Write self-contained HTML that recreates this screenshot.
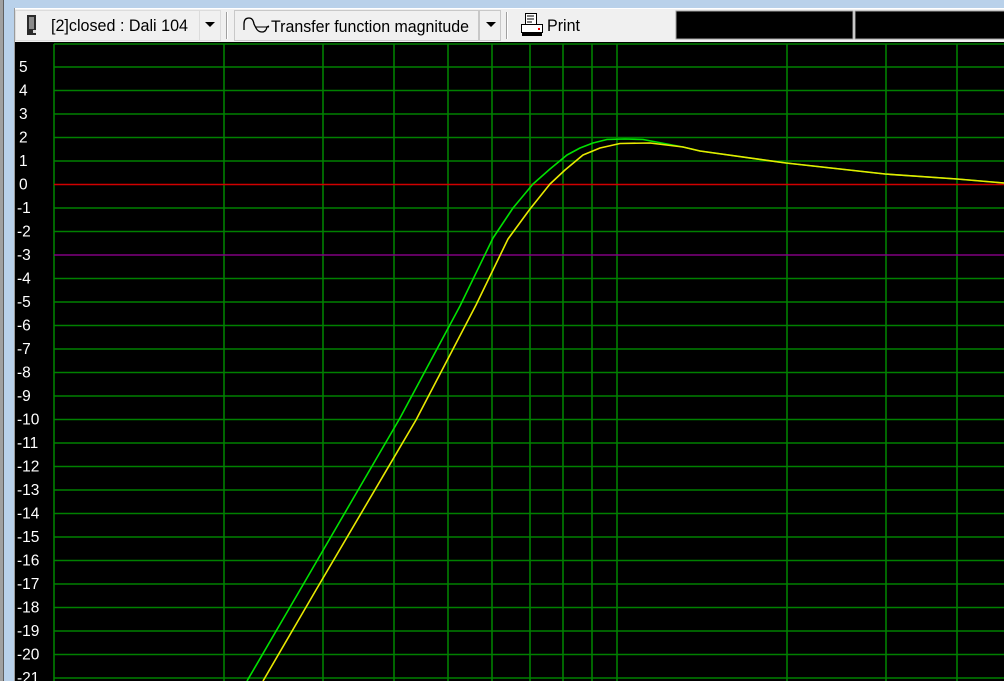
<!DOCTYPE html>
<html><head><meta charset="utf-8"><style>
html,body{margin:0;padding:0;width:1004px;height:681px;overflow:hidden;background:#000;}
svg{display:block}
text{font-family:"Liberation Sans",sans-serif;}
</style></head><body>
<svg width="1004" height="681" viewBox="0 0 1004 681" xmlns="http://www.w3.org/2000/svg">
<!-- window frame -->
<rect x="0" y="0" width="1004" height="681" fill="#b9d1ea"/>
<rect x="0" y="0" width="3" height="681" fill="#a0a0a0"/>
<rect x="3" y="0" width="1" height="681" fill="#606060"/>
<rect x="14" y="8" width="990" height="1" fill="#ffffff"/>
<rect x="14" y="9" width="990" height="34" fill="#f0f0f0"/>
<rect x="14" y="8" width="1" height="673" fill="#9a9a9a"/>
<!-- combo 1 -->
<rect x="15.5" y="10.5" width="205" height="30" fill="#f0f0f0" stroke="#dcdcdc"/>
<rect x="27" y="15" width="9" height="20" fill="#2a2a2a"/>
<rect x="29" y="17" width="5" height="12" fill="#8a8a8a"/>
<rect x="33" y="30" width="3" height="3" fill="#ddd"/>
<text x="51" y="31" font-size="16.5" fill="#000" textLength="137" lengthAdjust="spacingAndGlyphs">[2]closed : Dali 104</text>
<rect x="199.5" y="10.5" width="21" height="30" fill="#f0f0f0" stroke="#dcdcdc"/>
<path d="M205 22 L215 22 L210 27 Z" fill="#000"/>
<rect x="226" y="12" width="1" height="27" fill="#a0a0a0"/><rect x="227" y="12" width="1" height="27" fill="#fff"/>
<!-- combo 2 -->
<rect x="234.5" y="10.5" width="244" height="30" fill="#f0f0f0" stroke="#c8c8c8"/>
<path d="M244 30 L244 24 Q244 18 249 18 Q253 18 254 24 L256 28 Q258 32 262 32 Q266 32 267 27 L269 26" fill="none" stroke="#000" stroke-width="1.3"/>
<path d="M256 27 L269 27" stroke="#000" stroke-width="1"/>
<text x="271" y="32" font-size="16.5" fill="#000" textLength="198" lengthAdjust="spacingAndGlyphs">Transfer function magnitude</text>
<rect x="479.5" y="10.5" width="21" height="30" fill="#f0f0f0" stroke="#c8c8c8"/>
<path d="M486 22 L496 22 L491 27 Z" fill="#000"/>
<rect x="506" y="12" width="1" height="27" fill="#a0a0a0"/><rect x="507" y="12" width="1" height="27" fill="#fff"/>
<!-- print -->
<rect x="525.5" y="13.5" width="11" height="11" fill="#fff" stroke="#000"/>
<path d="M527 16h7M527 19h7M527 22h5" stroke="#000"/>
<rect x="521.5" y="24.5" width="21" height="8" fill="#fff" stroke="#000"/>
<rect x="522" y="33" width="20" height="3" fill="#000"/>
<rect x="538" y="28" width="2" height="2" fill="#e00"/>
<text x="547" y="31" font-size="16.5" fill="#000" textLength="33" lengthAdjust="spacingAndGlyphs">Print</text>
<!-- black boxes -->
<rect x="676" y="11" width="177" height="28" fill="#000" stroke="#a0a0a0"/>
<rect x="855" y="11" width="150" height="28" fill="#000" stroke="#a0a0a0"/>
<!-- plot -->
<rect x="15" y="42" width="989" height="639" fill="#000"/>
<g stroke="#008000" stroke-width="1.6">
<line x1="54" y1="44" x2="1004" y2="44"/>
<line x1="54" y1="44" x2="54" y2="681"/>
<line x1="224" y1="44" x2="224" y2="681"/>
<line x1="323" y1="44" x2="323" y2="681"/>
<line x1="394" y1="44" x2="394" y2="681"/>
<line x1="448" y1="44" x2="448" y2="681"/>
<line x1="492" y1="44" x2="492" y2="681"/>
<line x1="530" y1="44" x2="530" y2="681"/>
<line x1="563" y1="44" x2="563" y2="681"/>
<line x1="592" y1="44" x2="592" y2="681"/>
<line x1="617" y1="44" x2="617" y2="681"/>
<line x1="787" y1="44" x2="787" y2="681"/>
<line x1="886" y1="44" x2="886" y2="681"/>
<line x1="957" y1="44" x2="957" y2="681"/>
</g>
<g id="hl" stroke="#008000" stroke-width="1.6"></g>
<g id="labels" fill="#fff" font-size="15.5"></g>
<line x1="54" y1="255" x2="1004" y2="255" stroke="#800080" stroke-width="1.6"/>
<line x1="54" y1="184.5" x2="1004" y2="184.5" stroke="#d00000" stroke-width="1.6"/>
<polyline fill="none" stroke="#00e000" stroke-width="1.6" stroke-linejoin="round" points="247,681 300,590 400,418 460,306 493,238 513,208 533,184 550,169 567,155 580,148 593,143 607,139.5 625,139 643,139.5 683,147 700,151 786,163 885,174 957,179 1004,183"/>
<polyline fill="none" stroke="#e8e800" stroke-width="1.6" stroke-linejoin="round" points="263,681 316,590 416,420 476,305 508,239 530,209 550,184 565,170 583,155 600,148 620,143.5 650,143 683,147 700,151 786,163 885,174 957,179 1004,183"/>
</svg>
<script>
var hl=document.getElementById('hl'),lb=document.getElementById('labels'),ns='http://www.w3.org/2000/svg';
for(var k=5;k>=-21;k--){var y=184.5-23.5*k;
if(k!==0&&k!==-3&&y>44){var l=document.createElementNS(ns,'line');l.setAttribute('x1',54);l.setAttribute('x2',1004);l.setAttribute('y1',y);l.setAttribute('y2',y);hl.appendChild(l);}
var t=document.createElementNS(ns,'text');t.setAttribute('x',k<0?17:19);t.setAttribute('y',y+5);t.textContent=(k<0?'-'+(-k):''+k);lb.appendChild(t);}
</script>
</body></html>
